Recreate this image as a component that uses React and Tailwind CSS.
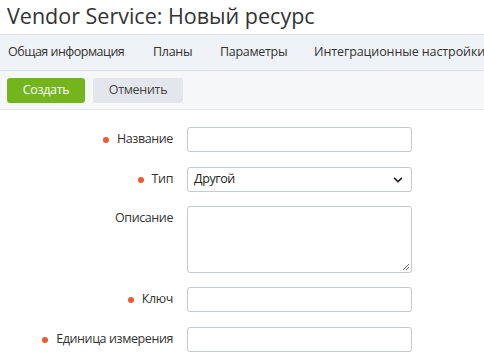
import { FaChevronDown } from 'react-icons/fa'

const Row = ({ label, required, children, className = '' }) => (
  <div className={`flex items-start ${className}`}>
    <div className="w-[173px] flex items-center justify-end h-[25px]">
      {required && <span className="w-[6px] h-[6px] rounded-full bg-[#ee5a2f] mr-[8px]" />}
      <span className="text-[12.5px] tracking-[-0.4px] text-[#333]">{label}</span>
    </div>
    <div className="ml-[14px]">{children}</div>
  </div>
)

const inputCls = 'w-[225px] h-[25px] border border-[#c5c9d0] rounded-[3px] bg-white'

export default function App() {
  return (
    <div className="w-[484px] h-[357px] bg-white overflow-hidden" style={{ fontFamily: '"Open Sans", "Noto Sans", sans-serif' }}>
      <h1 className="h-[35px] pl-[7px] pt-[1px] text-[21.5px] leading-[30px] text-[#333] border-b border-[#dcdfe4]">
        Vendor Service: Новый ресурс
      </h1>
      <div className="h-[36px] bg-[#eff2f6] border-b border-[#dcdfe4] flex items-center gap-[30px] pl-[8px] text-[12.5px] text-[#333] whitespace-nowrap">
        <span className="w-[115px] tracking-[-0.5px]">Общая информация</span>
        <span className="w-[37px] tracking-[-0.3px]">Планы</span>
        <span className="w-[64px] tracking-[-0.3px]">Параметры</span>
        <span className="tracking-[-0.1px]">Интеграционные настройки</span>
      </div>
      <div className="h-[39px] bg-[#f6f7f9] border-b border-[#e3e6eb] flex items-center gap-[8px] pl-[7px] text-[12.5px] tracking-[-0.3px]">
        <button className="h-[25px] w-[78px] rounded-[3px] bg-[#74b51d] text-white">Создать</button>
        <button className="h-[25px] w-[90px] rounded-[3px] bg-[#e3e6ec] text-[#444]">Отменить</button>
      </div>
      <div className="pt-[17px] flex flex-col">
        <Row label="Название" required>
          <div className={inputCls} />
        </Row>
        <Row label="Тип" required className="mt-[15px]">
          <div className={`${inputCls} flex items-center justify-between pl-[6px] pr-[8px]`}>
            <span className="text-[12.5px] tracking-[-0.4px] text-[#222]">Другой</span>
            <FaChevronDown className="text-[10px] text-[#222]" />
          </div>
        </Row>
        <Row label="Описание" className="mt-[14px]">
          <div className={`${inputCls} h-[67px] relative`}>
            <svg className="absolute right-[1px] bottom-[1px]" width="8" height="8" viewBox="0 0 8 8">
              <path d="M7 1 L1 7 M7 4 L4 7" stroke="#666" strokeWidth="1" />
            </svg>
          </div>
        </Row>
        <Row label="Ключ" required className="mt-[14px]">
          <div className={inputCls} />
        </Row>
        <Row label="Единица измерения" required className="mt-[15px]">
          <div className={inputCls} />
        </Row>
      </div>
    </div>
  )
}
